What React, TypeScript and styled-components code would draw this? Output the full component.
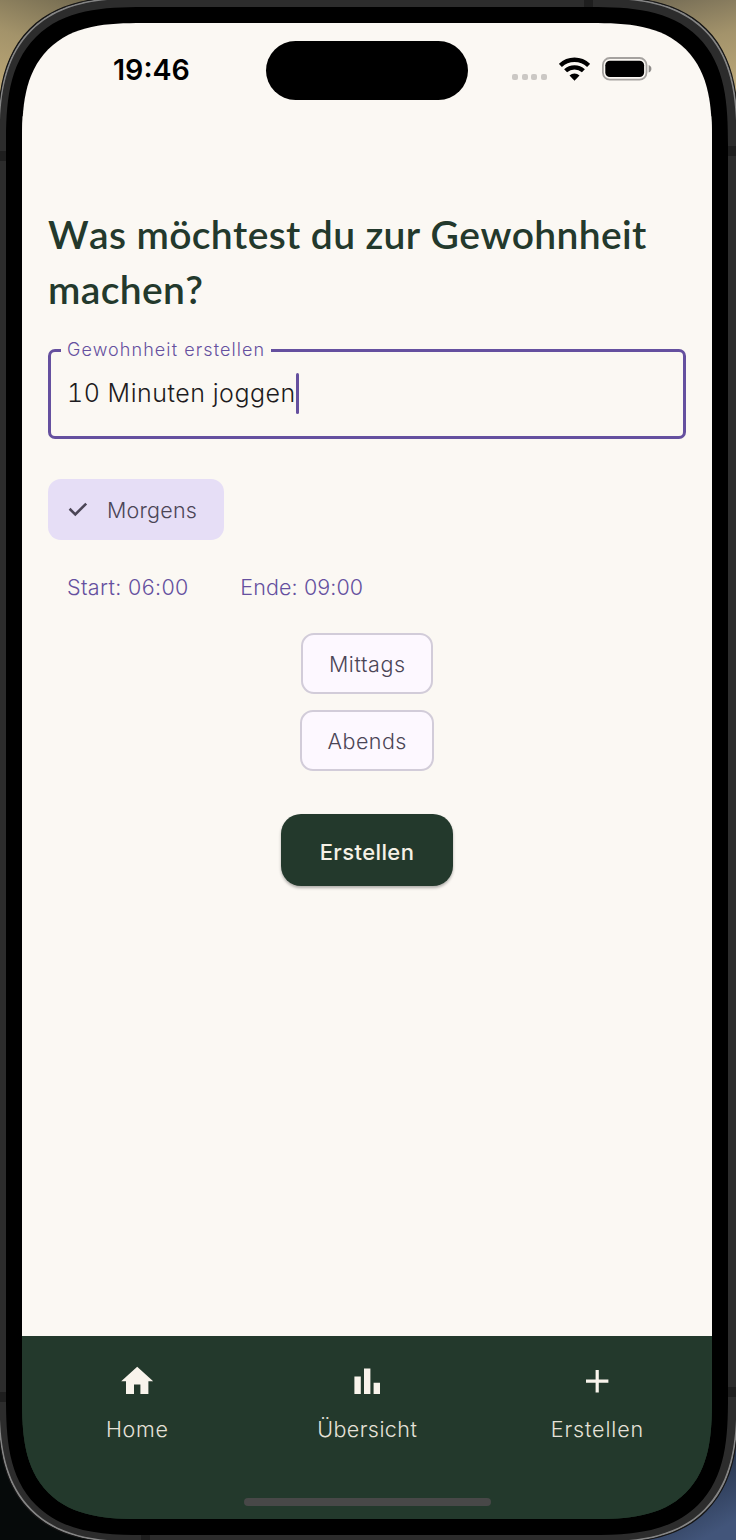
import React from "react";
import styled, { createGlobalStyle } from "styled-components";

const GlobalStyle = createGlobalStyle`
  *, *::before, *::after { box-sizing: border-box; }
  body { margin: 0; background: #000; }
  button { appearance: none; border: 0; margin: 0; padding: 0; background: none; }
`;

const color = {
  cream: "#fbf8f3",
  green: "#23392c",
  purple: "#65509f",
  ink: "#1d1b20",
  chipText: "#4b4556",
};

const body = `"Inter", "Liberation Sans", sans-serif`;
const display = `"Lato", "Liberation Sans", sans-serif`;

const Desktop = styled.div`
  position: relative;
  width: 736px;
  height: 1540px;
  overflow: hidden;
  background:
    linear-gradient(200deg, #6f674e 0%, #a3936a 45%, #c5ae7a 100%) 0 0 / 100px 110px no-repeat,
    linear-gradient(165deg, #6a6350 0%, #a3936b 45%, #c5b07f 100%) 100% 0 / 130px 110px no-repeat,
    linear-gradient(150deg, #16202f 30%, #42557a 90%) 100% 100% / 120px 130px no-repeat,
    #060a0a;
`;

const Frame = styled.div`
  width: 742px;
  height: 1548px;
  margin: -4px 0 0 -3px;
  padding: 10px 8px 4px;
  border: 1px solid #151515;
  border-radius: 113px;
  background: #2c2c2c;
  box-shadow: inset 0 0 0 1.5px #858585;
  @supports (corner-shape: superellipse(1.5)) {
    border-radius: 150px;
    corner-shape: superellipse(1.5);
  }
`;

const Bezel = styled.div`
  width: 722px;
  height: 1528px;
  padding: 16px;
  border-radius: 104px;
  background: #000;
  @supports (corner-shape: superellipse(1.5)) {
    border-radius: 138px;
    corner-shape: superellipse(1.5);
  }
`;

const Screen = styled.div`
  display: flex;
  flex-direction: column;
  width: 690px;
  height: 1496px;
  overflow: hidden;
  border-radius: 89px;
  background: linear-gradient(${color.cream} 50%, ${color.green} 50%);
  @supports (corner-shape: superellipse(1.5)) {
    border-radius: 121px;
    corner-shape: superellipse(1.5);
  }
`;

const Antenna = styled.span<{ $x: number; $y: number; $across?: boolean }>`
  position: absolute;
  left: ${(p) => p.$x}px;
  top: ${(p) => p.$y}px;
  width: ${(p) => (p.$across ? 9 : 8)}px;
  height: ${(p) => (p.$across ? 7 : 10)}px;
  background: #1e1e1e;
`;

const StatusBar = styled.header`
  display: grid;
  grid-template-columns: 244px 202px 244px;
  height: 93px;
  padding-top: 18px;
`;

const Clock = styled.time`
  padding-left: 91px;
  font: 600 28.6px/58px ${body};
  color: #000;
`;

const Island = styled.div`
  height: 59px;
  border-radius: 30px;
  background: #000;
`;

const StatusIcons = styled.div`
  display: flex;
  align-items: flex-start;
  padding: 15px 0 0 42px;
`;

const Dots = styled.div`
  display: flex;
  gap: 3.7px;
  margin: 18px 12px 0 2px;
  span {
    width: 6px;
    height: 6px;
    border-radius: 2px;
    background: #cbc8c4;
  }
`;

const Battery = styled.svg`
  margin-left: 12px;
`;

const Content = styled.main`
  display: flex;
  flex-direction: column;
  flex: 1;
  padding: 91px 26px 0;
  background: ${color.cream};
`;

const Title = styled.h1`
  margin: 0;
  font: 600 39px/55px ${display};
  font-kerning: none;
  letter-spacing: 0.35px;
  color: ${color.green};
`;

const Field = styled.div`
  position: relative;
  display: flex;
  align-items: center;
  height: 90px;
  margin: 32px 0 40px;
  padding: 0 17px 2px;
  border: 3px solid ${color.purple};
  border-radius: 7px;
`;

const FieldLabel = styled.span`
  position: absolute;
  left: 10px;
  top: -13px;
  width: 210px;
  padding-left: 6px;
  background: ${color.cream};
  font: 300 18px/22px ${body};
  letter-spacing: 1.08px;
  white-space: nowrap;
  color: ${color.purple};
`;

const FieldValue = styled.span`
  margin-left: -1px;
  font: 300 25px/40px ${body};
  font-variant-numeric: tabular-nums;
  letter-spacing: 0.52px;
  color: ${color.ink};
`;

const Caret = styled.span`
  width: 3px;
  height: 41px;
  border-radius: 1.5px;
  background: ${color.purple};
`;

const Label = styled.span<{ $track: number }>`
  margin-right: -${(p) => p.$track}px;
  font: 300 21.5px/30px ${body};
  letter-spacing: ${(p) => p.$track}px;
  white-space: nowrap;
`;

const Chip = styled.button<{ $width: number; $selected?: boolean }>`
  display: flex;
  align-items: center;
  justify-content: ${(p) => (p.$selected ? "flex-start" : "center")};
  align-self: ${(p) => (p.$selected ? "flex-start" : "center")};
  gap: 18px;
  width: ${(p) => p.$width}px;
  height: 61px;
  padding: 0 ${(p) => (p.$selected ? 20 : 0)}px;
  border: ${(p) => (p.$selected ? "0" : "2px solid #d2ccd9")};
  border-radius: 13px;
  background: ${(p) => (p.$selected ? "#e6def6" : "#fdf8ff")};
  color: ${color.chipText};
  svg { margin-top: -2px; }
`;

const Times = styled.div`
  display: flex;
  gap: 52px;
  height: 30px;
  margin: 32px 0 31px 19px;
  color: ${color.purple};
`;

const ChipStack = styled.div`
  display: flex;
  flex-direction: column;
  gap: 16px;
`;

const Submit = styled.button`
  align-self: center;
  width: 172px;
  height: 72px;
  margin-top: 43px;
  padding-top: 4px;
  border-radius: 20px;
  background: ${color.green};
  box-shadow: 0 2px 3px rgba(0, 0, 0, 0.3);
  font: 500 22px/30px ${body};
  letter-spacing: 0.4px;
  color: #f6f1e6;
`;

const TabBar = styled.nav`
  display: grid;
  grid-template-columns: repeat(3, 1fr);
  grid-template-rows: 162px 8px;
  height: 183px;
  background: ${color.green};
  color: #f9f4ec;
`;

const Tab = styled.div`
  display: flex;
  flex-direction: column;
  align-items: center;
  padding-top: 26px;
  gap: 14px;
  span { color: #e6e2d9; }
`;

const HomeIndicator = styled.div`
  grid-column: 1 / -1;
  justify-self: center;
  width: 247px;
  height: 8px;
  border-radius: 4px;
  background: #484848;
`;

const TabIcon = ({ d }: { d: string }) => (
  <svg width="38.4" height="38.4" viewBox="0 0 24 24" fill="currentColor">
    <path d={d} />
  </svg>
);

const tabs = [
  { label: "Home", track: 0.7, d: "M10 20v-6h4v6h5v-8h3L12 3 2 12h3v8z" },
  { label: "Übersicht", track: 0.44, d: "M4 9h4v11H4zM16 13h4v7h-4zM10 4h4v16h-4z" },
  { label: "Erstellen", track: 0.85, d: "M19 13h-6v6h-2v-6H5v-2h6V5h2v6h6z" },
];

export default function App() {
  return (
    <Desktop>
      <GlobalStyle />
      <Frame>
        <Bezel>
          <Screen>
            <StatusBar>
              <Clock>19:46</Clock>
              <Island />
              <StatusIcons>
                <Dots>
                  <span />
                  <span />
                  <span />
                  <span />
                </Dots>
                <svg width="31" height="25" viewBox="0 0 31 25" fill="none" stroke="#000">
                  <path d="M1.4 9.4a20.4 20.4 0 0 1 28.2 0" strokeWidth="4.4" />
                  <path d="M6.6 14.8a13 13 0 0 1 17.8 0" strokeWidth="4.3" />
                  <path d="M15.5 24.8l-5-5.4a7.2 7.2 0 0 1 10 0z" fill="#000" stroke="none" />
                </svg>
                <Battery width="51" height="25" viewBox="0 0 51 25">
                  <rect x="0.9" y="2" width="43.6" height="21.6" rx="7" fill="none" stroke="#a5a29f" strokeWidth="1.8" />
                  <rect x="3.3" y="4.7" width="38.8" height="16.4" rx="4.6" fill="#000" />
                  <path d="M46.7 9c3.6 1.3 3.6 6.2 0 7.6z" fill="#8f8d8a" />
                </Battery>
              </StatusIcons>
            </StatusBar>

            <Content>
              <Title>Was möchtest du zur Gewohnheit machen?</Title>
              <Field>
                <FieldLabel>Gewohnheit erstellen</FieldLabel>
                <FieldValue>10 Minuten joggen</FieldValue>
                <Caret />
              </Field>

              <Chip $width={176} $selected>
                <svg width="21" height="16" viewBox="0 0 21 16" fill="none" stroke="currentColor" strokeWidth="2.6">
                  <path d="M1.6 7.8l5.7 5.6L18.2 2.6" />
                </svg>
                <Label $track={0.2}>Morgens</Label>
              </Chip>

              <Times>
                <Label $track={0.36}>Start: 06:00</Label>
                <Label $track={0.1}>Ende: 09:00</Label>
              </Times>

              <ChipStack>
                <Chip $width={132}>
                  <Label $track={0.57}>Mittags</Label>
                </Chip>
                <Chip $width={134}>
                  <Label $track={0.46}>Abends</Label>
                </Chip>
              </ChipStack>

              <Submit>Erstellen</Submit>
            </Content>

            <TabBar>
              {tabs.map((tab) => (
                <Tab key={tab.label}>
                  <TabIcon d={tab.d} />
                  <Label $track={tab.track}>{tab.label}</Label>
                </Tab>
              ))}
              <HomeIndicator />
            </TabBar>
          </Screen>
        </Bezel>
      </Frame>
      <Antenna $x={584} $y={0} $across />
      <Antenna $x={141} $y={1535} $across />
      <Antenna $x={-2} $y={151} />
      <Antenna $x={728} $y={146} />
      <Antenna $x={-2} $y={1392} />
      <Antenna $x={728} $y={1387} />
    </Desktop>
  );
}
